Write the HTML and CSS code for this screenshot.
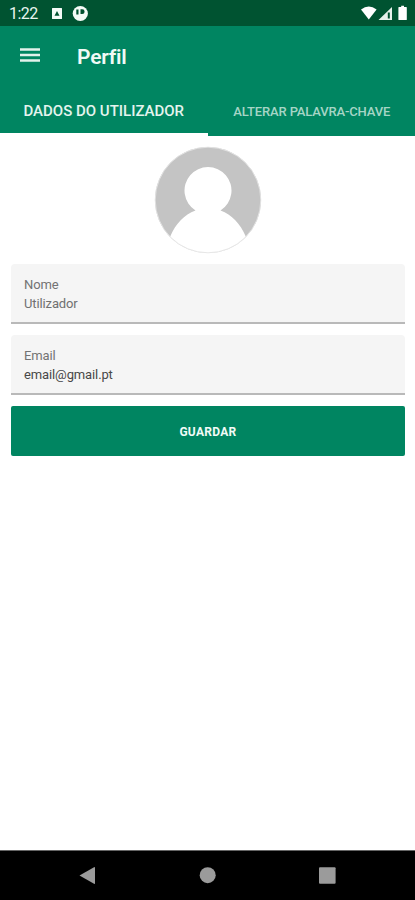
FILE: index.html
```html
<!DOCTYPE html>
<html lang="pt">
<head>
<meta charset="utf-8">
<meta name="viewport" content="width=device-width, initial-scale=1">
<title>Perfil</title>
<link rel="stylesheet" href="styles.css">
</head>
<body>
<div class="screen">
  <div class="status">
    <span class="clock">1:22</span>
    <svg class="status-left" width="40" height="26" viewBox="0 0 40 26">
      <path fill="#f4fbf7" fill-rule="evenodd" d="M2.500 8h9q.5 0 .5.500v10q0 .5-.5.500h-9q-.5 0-.5-.5v-10q0-.5.500-.5zM4.500 15.800h5L7 11z"/>
      <circle cx="30.300" cy="13.500" r="7.600" fill="#f4fbf7"/>
      <path fill="#00502f" d="M26.300 9.500h2.200v5h-2.200zM30.500 9.300h1.700a2.400 2.400 0 0 1 0 4.800h-1.700z"/>
    </svg>
    <svg class="status-right" width="50" height="26" viewBox="0 0 50 26">
      <path fill="#fff" d="M3 9.500Q10.800 3.500 18.600 9.500L10.800 19.500z"/>
      <path fill="#e6f2ec" d="M34 7V20H20.500z"/>
      <path fill="#00502f" d="M29.800 12.500h2v6h-2z"/>
      <path fill="#fff" d="M41 7h2.200V5.700h2.800V7h2.200q.6 0 .6.600v11.800q0 .6-.6.600h-7.200q-.6 0-.6-.6V7.600q0-.6.600-.6z"/>
    </svg>
  </div>
  <header class="toolbar">
    <svg width="20" height="16" viewBox="0 0 20 16"><path fill="#e2f2ec" d="M0 1.200h20v2.500H0zM0 6.700h20v2.500H0zM0 12.200h20v2.500H0z"/></svg>
    <h1>Perfil</h1>
  </header>
  <nav class="tabs">
    <div class="tab active"><span>DADOS DO UTILIZADOR</span></div>
    <div class="tab"><span>ALTERAR PALAVRA-CHAVE</span></div>
  </nav>
  <main>
    <svg class="avatar" width="108" height="108" viewBox="0 0 108 108">
      <defs><clipPath id="disc"><circle cx="54" cy="54" r="53"/></clipPath></defs>
      <g clip-path="url(#disc)">
        <rect width="108" height="108" fill="#c4c4c4"/>
        <path fill="#fff" d="M41.500 64.500A23.500 23.500 0 1 1 66.500 64.500C78 69 86 77 92 91V108H16V91C22 77 30 69 41.500 64.500z"/>
      </g>
      <circle cx="54" cy="54" r="52.800" fill="none" stroke="#e4e4e4" stroke-width=".9"/>
    </svg>
    <div class="field"><div class="label">Nome</div><div class="value muted">Utilizador</div></div>
    <div class="field"><div class="label">Email</div><div class="value">email@gmail.pt</div></div>
    <div class="save">GUARDAR</div>
  </main>
  <footer class="navbar">
    <svg width="415" height="49" viewBox="0 0 415 49" fill="#9b9b9b">
      <path d="M79.500 24.500L94 16.200q1-.5 1 .5v15.600q0 1-1 .5z"/>
      <circle cx="207.700" cy="24.200" r="8"/>
      <rect x="319" y="16.200" width="16.600" height="16.600" rx="1"/>
    </svg>
  </footer>
</div>
</body>
</html>
```
FILE: styles.css
```css
* { box-sizing: border-box; }
body { margin: 0; background: #fff; font-family: Roboto, sans-serif; }
.screen { width: 415px; height: 900px; display: flex; flex-direction: column; overflow: hidden; }
.status { height: 26px; flex: none; background: #005331; display: flex; align-items: center; padding: 0 7px 0 9px; }
.clock { color: #e8f5ee; font-size: 16px; line-height: 26px; width: 41px; padding-top: 2px; letter-spacing: -.5px; }
.status-right { margin-left: auto; }
.toolbar { height: 61px; flex: none; background: #008561; display: flex; align-items: center; padding: 0 20px; gap: 37px; }
.toolbar svg { margin-top: -3px; }
.toolbar h1 { margin: 0; color: #f0faf6; font-size: 21px; font-weight: 600; line-height: 28px; letter-spacing: -.2px; }
.tabs { height: 49px; flex: none; display: grid; grid-template-columns: 1fr 1fr; background: #008561; }
.tab { display: flex; justify-content: center; align-items: center; font-size: 13px; font-weight: 500; color: #a6d5c6; white-space: nowrap; letter-spacing: -.15px; padding-left: 1px; }
.tab.active { font-size: 15px; color: #e4f4ee; border-bottom: 3px solid #fff; padding: 2px 0 0; letter-spacing: 0; }
main { flex: 1; padding: 10px 10px 0 11px; display: flex; flex-direction: column; }
.avatar { align-self: center; flex: none; margin-bottom: 10px; }
.field { height: 60px; flex: none; background: #f5f5f5; border-bottom: 2px solid #b9b9b9; border-radius: 4px 4px 0 0; padding: 12px 13px 0; margin-bottom: 11px; }
.label, .value { font-size: 13px; line-height: 18.500px; letter-spacing: -.12px; }
.label { color: #737373; }
.value { color: #484848; }
.value.muted { color: #707070; }
.save { height: 50px; flex: none; background: #008561; color: #f2fbf7; border-radius: 2px; display: flex; align-items: center; justify-content: center; padding-top: 2px; font-size: 12px; font-weight: 700; letter-spacing: .3px; }
.navbar { height: 50px; flex: none; background: #000; border-top: 1px solid #666; }
.navbar svg { display: block; }
```
